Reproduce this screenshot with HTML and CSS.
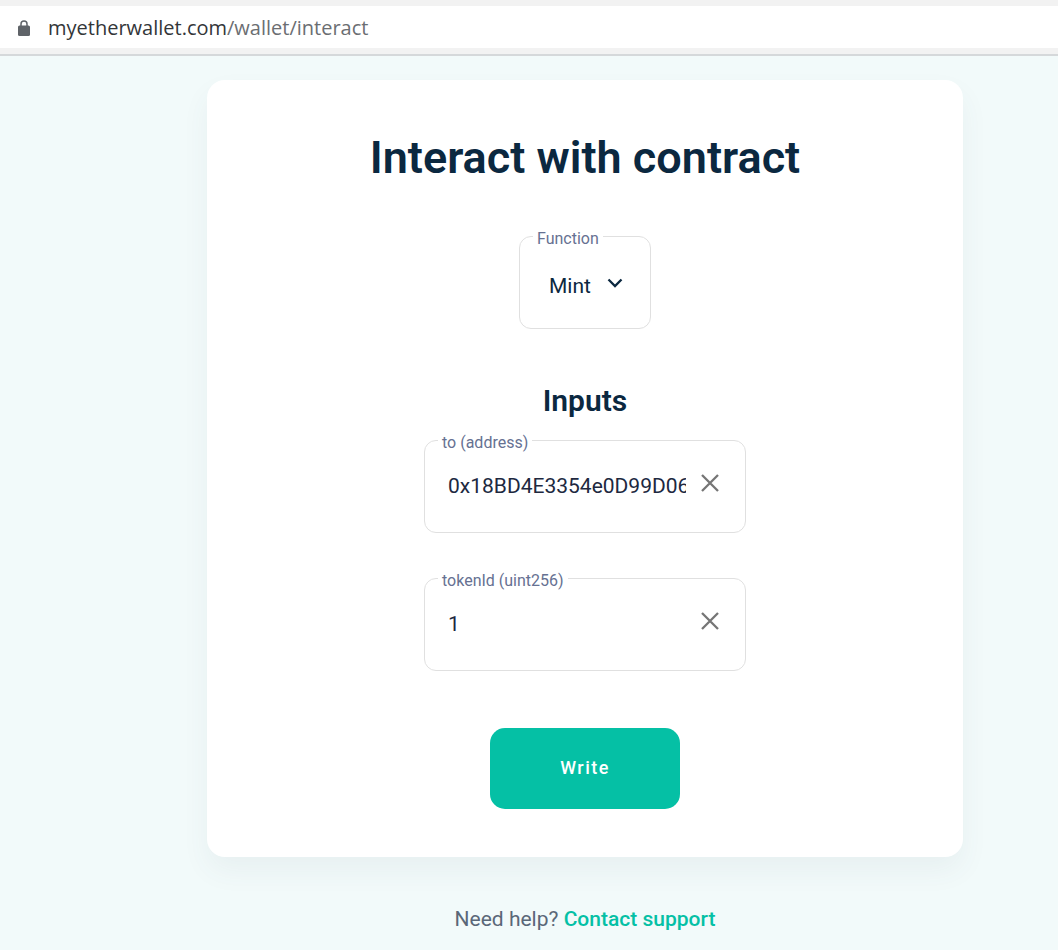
FILE: index.html
```html
<!DOCTYPE html>
<html lang="en">
<head>
<meta charset="utf-8">
<meta name="viewport" content="width=device-width, initial-scale=1">
<title>Interact with contract</title>
<link rel="stylesheet" href="styles.css">
</head>
<body>
<header class="toolbar">
  <div class="address">
    <svg class="lock" viewBox="0 0 14 18" aria-hidden="true">
      <path d="M4 8V5a3 3 0 0 1 6 0v3" fill="none" stroke="#5f6368" stroke-width="1.500"/>
      <rect x="1" y="6.500" width="12" height="10.500" rx="1.500" fill="#5f6368"/>
    </svg>
    <span class="url"><span class="host">myetherwallet.com</span>/wallet/interact</span>
  </div>
</header>
<main class="page">
  <form class="card">
    <h1 class="title">Interact with contract</h1>
    <fieldset class="field field-function">
      <legend class="legend"><label for="function">Function</label></legend>
      <div class="select-row">
        <select class="select" id="function"><option>Mint</option></select>
        <svg class="chevron" viewBox="0 0 16 10" aria-hidden="true">
          <path d="M1.500 1.500 8 8l6.500-6.500" fill="none" stroke="#0b2840" stroke-width="2.300"/>
        </svg>
      </div>
    </fieldset>
    <h2 class="subtitle">Inputs</h2>
    <fieldset class="field field-input">
      <legend class="legend"><label for="to">to (address)</label></legend>
      <div class="input-row">
        <input class="input" id="to" type="text" value="0x18BD4E3354e0D99D06">
        <button class="clear" type="button" aria-label="Clear address">
          <svg class="cross" viewBox="0 0 18 18"><path d="M1 1l16 16M17 1L1 17" fill="none" stroke="#757575" stroke-width="2.300"/></svg>
        </button>
      </div>
    </fieldset>
    <fieldset class="field field-input">
      <legend class="legend"><label for="token">tokenId (uint256)</label></legend>
      <div class="input-row">
        <input class="input" id="token" type="text" value="1">
        <button class="clear" type="button" aria-label="Clear token">
          <svg class="cross" viewBox="0 0 18 18"><path d="M1 1l16 16M17 1L1 17" fill="none" stroke="#757575" stroke-width="2.300"/></svg>
        </button>
      </div>
    </fieldset>
    <button class="write" type="button">Write</button>
  </form>
  <p class="help">Need help? <a class="support" href="#support">Contact support</a></p>
</main>
</body>
</html>
```
FILE: styles.css
```css
* {
  box-sizing: border-box;
}

body {
  margin: 0;
  min-height: 100vh;
  background: #f2fafa;
  color: #0b2840;
  font-family: Roboto, "Liberation Sans", sans-serif;
}

.toolbar {
  padding: 6px 0;
  background: #f2f2f2;
  border-bottom: 2px solid #d5d8da;
}

.address {
  display: flex;
  align-items: center;
  gap: 17px;
  height: 42px;
  padding: 2px 0 0 17px;
  background: #fff;
}

.lock {
  width: 14px;
  height: 18px;
}

.url {
  color: #6b6e72;
  font: 20px/28px "Open Sans", "Noto Sans", sans-serif;
}

.host {
  color: #333639;
}

.page {
  display: flex;
  flex-direction: column;
  align-items: center;
  padding: 24px 0 16px 112px;
}

.card {
  display: flex;
  flex-direction: column;
  align-items: center;
  width: 100%;
  max-width: 756px;
  padding: 48px 24px;
  background: #fff;
  border-radius: 18px;
  box-shadow: 0 14px 28px rgba(60, 90, 100, 0.06);
}

.title {
  margin: 0;
  font-size: 45px;
  line-height: 60px;
  font-weight: 600;
}

.field {
  min-width: 0;
  margin: 0;
  padding: 0 13px;
  border: 1px solid #e0e0e0;
  border-radius: 12px;
}

.field-function {
  width: 132px;
  margin-top: 37px;
}

.field-input {
  width: 100%;
  max-width: 322px;
}

.field-input + .field-input {
  margin-top: 34px;
}

.legend {
  padding: 6px 4px 0;
  color: #667192;
  font-size: 16px;
  line-height: 16px;
}

.select-row {
  display: grid;
  align-items: center;
  height: 81px;
  padding: 0 14px 4px 16px;
}

.select {
  grid-area: 1 / 1;
  width: 100%;
  padding: 0;
  border: 0;
  background: transparent;
  color: #0b2840;
  font: 21px/32px Roboto, sans-serif;
  appearance: none;
}

.chevron {
  grid-area: 1 / 1;
  justify-self: end;
  width: 16px;
  height: 10px;
  margin-bottom: 6px;
  pointer-events: none;
}

.subtitle {
  margin: 52px 0 8px;
  font-size: 30px;
  line-height: 40px;
  font-weight: 600;
}

.input-row {
  display: flex;
  align-items: center;
  gap: 15px;
  height: 81px;
  padding: 0 13px 12px 10px;
}

.input {
  flex: 1;
  min-width: 0;
  height: 32px;
  padding: 0;
  border: 0;
  background: transparent;
  color: #20283f;
  font: 21px/32px Roboto, sans-serif;
}

.clear {
  display: flex;
  padding: 0 0 6px;
  border: 0;
  background: transparent;
}

.cross {
  width: 18px;
  height: 18px;
}

.write {
  width: 190px;
  height: 81px;
  margin-top: 57px;
  padding: 0 0 2px;
  border: 0;
  border-radius: 15px;
  background: #05c0a5;
  color: #fff;
  font: 500 18px/24px Roboto, sans-serif;
  letter-spacing: 1.5px;
}

.help {
  margin: 48px 0 0;
  color: #5a6778;
  font-size: 21px;
  line-height: 28px;
}

.support {
  color: #05c0a5;
  font-weight: 500;
  text-decoration: none;
}
```
